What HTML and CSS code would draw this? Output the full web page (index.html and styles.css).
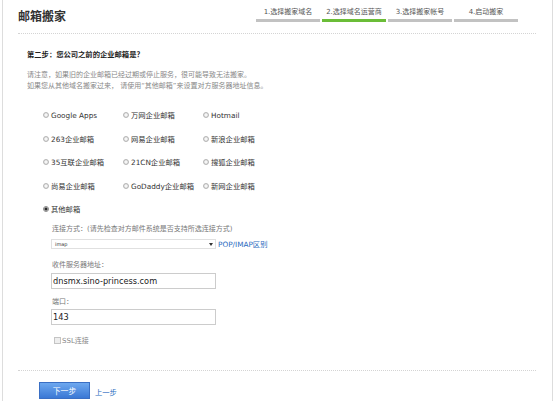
FILE: index.html
```html
<!DOCTYPE html>
<html lang="zh-CN">
<head>
<meta charset="utf-8">
<title>邮箱搬家</title>
<link rel="stylesheet" href="styles.css">
</head>
<body>
<div class="page">
  <header class="head">
    <h1 class="title">邮箱搬家</h1>
    <ol class="steps">
      <li class="step"><span class="step-label">1.选择搬家域名</span><span class="step-bar"></span></li>
      <li class="step is-current"><span class="step-label">2.选择域名运营商</span><span class="step-bar"></span></li>
      <li class="step"><span class="step-label">3.选择搬家帐号</span><span class="step-bar"></span></li>
      <li class="step"><span class="step-label">4.启动搬家</span><span class="step-bar"></span></li>
    </ol>
  </header>
  <main class="content">
    <h2 class="question">第二步：您公司之前的企业邮箱是？</h2>
    <p class="notice">请注意，如果旧的企业邮箱已经过期或停止服务，很可能导致无法搬家。<br>如果您从其他域名搬家过来， 请使用“其他邮箱”来设置对方服务器地址信息。</p>
    <div class="options">
      <label class="opt"><input type="radio" name="provider" class="radio"><span>Google Apps</span></label>
      <label class="opt"><input type="radio" name="provider" class="radio"><span>万网企业邮箱</span></label>
      <label class="opt"><input type="radio" name="provider" class="radio"><span>Hotmail</span></label>
      <label class="opt"><input type="radio" name="provider" class="radio"><span>263企业邮箱</span></label>
      <label class="opt"><input type="radio" name="provider" class="radio"><span>网易企业邮箱</span></label>
      <label class="opt"><input type="radio" name="provider" class="radio"><span>新浪企业邮箱</span></label>
      <label class="opt"><input type="radio" name="provider" class="radio"><span>35互联企业邮箱</span></label>
      <label class="opt"><input type="radio" name="provider" class="radio"><span>21CN企业邮箱</span></label>
      <label class="opt"><input type="radio" name="provider" class="radio"><span>搜狐企业邮箱</span></label>
      <label class="opt"><input type="radio" name="provider" class="radio"><span>尚易企业邮箱</span></label>
      <label class="opt"><input type="radio" name="provider" class="radio"><span>GoDaddy企业邮箱</span></label>
      <label class="opt"><input type="radio" name="provider" class="radio"><span>新网企业邮箱</span></label>
      <label class="opt opt-other"><input type="radio" name="provider" class="radio" checked><span>其他邮箱</span></label>
    </div>
    <div class="other">
      <div class="field-label">连接方式：(请先检查对方邮件系统是否支持所选连接方式)</div>
      <div class="select-row">
        <div class="select"><span>imap</span><span class="arrow"></span></div>
        <a class="link" href="#">POP/IMAP区别</a>
      </div>
      <div class="field-label field-gap">收件服务器地址：</div>
      <input class="text" type="text" value="dnsmx.sino-princess.com">
      <div class="field-label field-gap-sm">端口：</div>
      <input class="text text-port" type="text" value="143">
      <label class="check"><input type="checkbox" class="checkbox"><span>SSL连接</span></label>
    </div>
  </main>
  <footer class="foot">
    <button class="btn" type="button">下一步</button>
    <a class="back" href="#">上一步</a>
  </footer>
</div>
</body>
</html>
```

FILE: styles.css
```css
* { box-sizing: border-box; }

body {
  margin: 0;
  background: #fff;
  color: #444;
  font-family: "DejaVu Sans", "Noto Sans CJK SC", sans-serif;
}

.page {
  margin-left: 2px;
  width: 551px;
  min-height: 401px;
  border-left: 1px solid #ddd;
  border-right: 1px solid #ddd;
}

.head {
  display: flex;
  justify-content: space-between;
  align-items: flex-start;
  margin: 0 16px 0 15px;
  height: 34px;
  border-bottom: 1px dotted #d4d4d4;
}

.title {
  margin: 0;
  padding-top: 8px;
  font-family: "Noto Sans CJK SC", sans-serif;
  font-size: 12px;
  line-height: 16px;
  font-weight: bold;
  color: #333;
}

.steps {
  list-style: none;
  margin: 0 18px 0 0;
  padding: 8px 0 0;
  display: flex;
  gap: 2px;
}

.step {
  width: 64px;
  display: flex;
  flex-direction: column;
  align-items: center;
}

.step-label {
  font-size: 7px;
  line-height: 9px;
  color: #555;
  white-space: nowrap;
}

.step-bar {
  align-self: stretch;
  height: 3px;
  margin-top: 2px;
  background: #c2c2c2;
}

.is-current .step-bar { background: #6bbd38; }

.content { padding: 15px 0 0 24px; }

.question {
  margin: 0;
  font-size: 7.3px;
  line-height: 12px;
  font-weight: bold;
  color: #222;
}

.notice {
  margin: 8.5px 0 0;
  font-size: 7px;
  line-height: 11px;
  color: #888;
}

.options {
  display: grid;
  grid-template-columns: repeat(3, 80px);
  grid-auto-rows: 23.5px;
  margin: 12px 0 0 16px;
}

.opt {
  display: flex;
  align-items: center;
  gap: 2px;
  font-size: 7.3px;
  color: #333;
  white-space: nowrap;
}

.opt-other { grid-column: 1 / -1; }

.radio {
  appearance: none;
  margin: 0;
  width: 6px;
  height: 6px;
  border: 1px solid #b4b4b4;
  border-radius: 50%;
  background: radial-gradient(circle, #f6f6f6 0 1.2px, #d8d8d8 2px);
  flex: none;
}

.radio:checked {
  border-color: #8a8a8a;
  background: radial-gradient(circle, #2a2a2a 0 1.3px, #dcdcdc 1.8px);
}

.other { margin-left: 24px; }

.field-label {
  padding-left: 1px;
  margin-top: 2px;
  font-size: 7px;
  line-height: 12px;
  color: #777;
}

.field-gap { margin-top: 10px; }
.field-gap-sm { margin-top: 7px; }

.select-row {
  display: flex;
  align-items: center;
  gap: 2px;
  margin-top: 4px;
  height: 10px;
}

.select {
  width: 165px;
  height: 10px;
  border: 1px solid #e0e0e0;
  display: flex;
  align-items: center;
  justify-content: space-between;
  padding: 0 2px 0 3px;
  font-size: 5px;
  color: #333;
}

.arrow {
  width: 0;
  height: 0;
  border-left: 2px solid transparent;
  border-right: 2px solid transparent;
  border-top: 3px solid #333;
}

.link {
  font-size: 7.3px;
  color: #2a6ac0;
  text-decoration: none;
}

.text {
  display: block;
  width: 165px;
  height: 16px;
  margin: 2px 0 0;
  padding: 0 1px;
  border: 1px solid #ccc;
  font-family: "DejaVu Sans", sans-serif;
  font-size: 8.2px;
  color: #222;
  outline: none;
}

.text-port { margin-top: 1px; }

.check {
  display: flex;
  align-items: center;
  gap: 1px;
  margin-top: 9px;
  padding-left: 3px;
  height: 12px;
  font-size: 7px;
  color: #888;
}

.checkbox {
  appearance: none;
  margin: 0;
  width: 7px;
  height: 7px;
  border: 1px solid #c4c4c4;
  background: #eee;
}

.foot {
  display: flex;
  align-items: center;
  margin: 24px 16px 0 15px;
  padding: 11px 0 0 21px;
  border-top: 1px dotted #d4d4d4;
}

.btn {
  width: 51px;
  height: 17px;
  padding: 0;
  border: 1px solid #3a6fc4;
  background: linear-gradient(#6ea8ef, #3a78d5);
  color: #fff;
  font-family: "Noto Sans CJK SC", sans-serif;
  font-size: 7.8px;
}

.back {
  margin-left: 5px;
  margin-top: 3px;
  font-size: 7.3px;
  color: #2a6ac0;
  text-decoration: none;
}
```
